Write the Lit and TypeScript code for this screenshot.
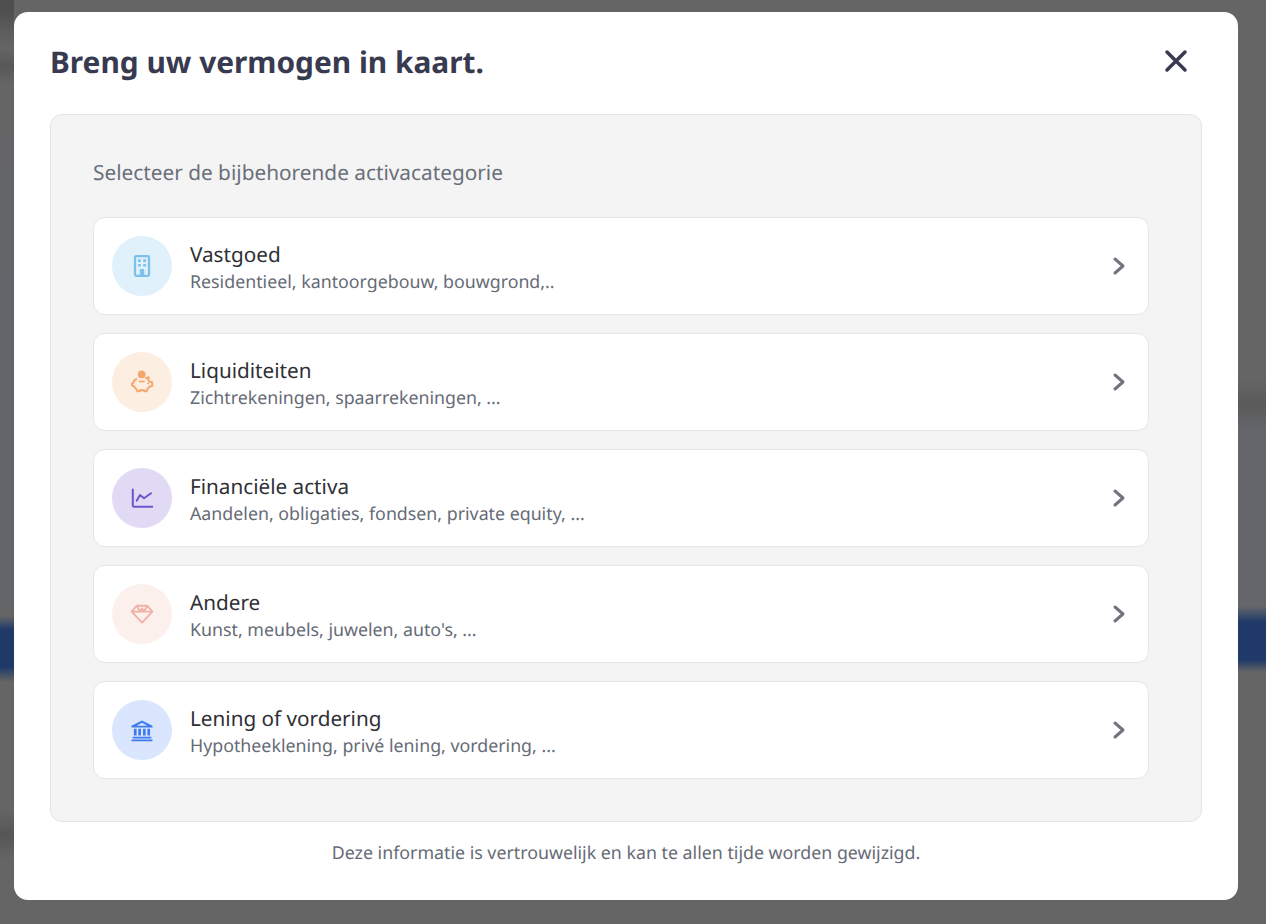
import { LitElement, html, css, svg } from "lit";
import { customElement } from "lit/decorators.js";

const icons = {
  building: svg`<path fill="none" stroke="currentColor" stroke-width="2.300" d="M5 3.500c0-.8.5-1.300 1.300-1.300h11.400c.8 0 1.300.5 1.300 1.300v17c0 .8-.5 1.300-1.300 1.300H6.300c-.8 0-1.300-.5-1.300-1.300z"/><path fill="currentColor" d="M8 5.300h2.800v2.600H8zM13.200 5.300H16v2.600h-2.800zM8 9.900h2.800v2.600H8zM13.200 9.900H16v2.600h-2.800zM9.800 15h4.400v6.800H9.800z"/>`,
  piggy: svg`<circle cx="11.700" cy="4.400" r="3.900" fill="currentColor"/><path fill="none" stroke="currentColor" stroke-width="2" stroke-linejoin="round" d="M7 8.600C4.800 9.500 3.600 11 3.500 12.800c-.6 0-1.500.3-1.600 1.200-.1 1 .7 1.900 2 2.100.5 1.300 1.400 2.300 2.600 3l.8 2.100h2.400l.4-1.100c1.300.2 2.500.2 3.800 0l.4 1.100h2.400l.8-2.500c1-.6 1.700-1.300 2.200-2.200l2.500-.4v-3.900l-2.400-.4c-.4-.8-.9-1.500-1.500-2l.3-2.600c-1.300 0-2.500.7-3.200 1.700"/><path stroke="currentColor" stroke-width="1.700" d="M8.700 11.500h6"/><circle cx="18.200" cy="13.300" r="1.100" fill="currentColor"/>`,
  chart: svg`<path fill="none" stroke="currentColor" stroke-width="2" stroke-linecap="round" stroke-linejoin="round" d="M2.800 3.400v15.800c0 1 .5 1.500 1.500 1.500h18"/><path fill="none" stroke="currentColor" stroke-width="2" stroke-linecap="round" stroke-linejoin="round" d="M6.700 14.700L10 9l4 3.300 7-5"/>`,
  diamond: svg`<path fill="none" stroke="currentColor" stroke-width="1.900" stroke-linejoin="round" d="M6.600 3.800h10.800l5 5.800L12 20.600 1.600 9.600zM1.600 9.600h20.800M6.600 3.800l3.400 5.800 2-3.200 2 3.200 3.400-5.800"/>`,
  bank: svg`<path fill="currentColor" d="M12 2.600l10.500 5.200v1.800h-21V7.800zM12 4.800L6.600 7.700h10.800zM3.900 10.800h2.700v6.800H3.900zM8.300 10.800H11v6.800H8.300zM13 10.800h2.700v6.800H13zM17.400 10.800h2.700v6.800h-2.700zM2.700 18.800h18.600v1.700H2.700zM1.500 21.400h21v1.800h-21z"/>`,
};

const rows = [
  { icon: icons.building, tone: "sky", title: "Vastgoed", sub: "Residentieel, kantoorgebouw, bouwgrond,.." },
  { icon: icons.piggy, tone: "peach", title: "Liquiditeiten", sub: "Zichtrekeningen, spaarrekeningen, ..." },
  { icon: icons.chart, tone: "violet", title: "Financiële activa", sub: "Aandelen, obligaties, fondsen, private equity, ..." },
  { icon: icons.diamond, tone: "rose", title: "Andere", sub: "Kunst, meubels, juwelen, auto's, ..." },
  { icon: icons.bank, tone: "blue", title: "Lening of vordering", sub: "Hypotheeklening, privé lening, vordering, ..." },
];

@customElement("app-root")
export class AppRoot extends LitElement {
  static styles = css`
    :host {
      display: block;
      height: 924px;
      box-sizing: border-box;
      padding: 12px 28px 24px 14px;
      font-family: "Noto Sans", "Open Sans", sans-serif;
      text-rendering: geometricPrecision;
      background:
        linear-gradient(
            to bottom,
            #4f4f4f 12px,
            #5c5c5c 30px,
            #656565 48px,
            #585858 66px,
            #656565 84px,
            #63656a 290px,
            #63656a 600px,
            #656565 616px,
            #1f3a68 630px,
            #1f3a68 667px,
            #656565 682px,
            #656565 810px,
            #565656 835px,
            #656565 860px
          )
          left / 14px 100% no-repeat,
        linear-gradient(
            to bottom,
            #656565 380px,
            #5a5a5a 405px,
            #65666b 430px,
            #65666b 606px,
            #1f3a68 622px,
            #1f3a68 660px,
            #656565 672px
          )
          right / 28px 100% no-repeat,
        #656565;
    }
    .modal {
      height: 888px;
      box-sizing: border-box;
      background: #fff;
      border-radius: 14px;
      padding: 0 36px;
      display: flex;
      flex-direction: column;
    }
    .head {
      height: 102px;
      display: flex;
      align-items: center;
      justify-content: space-between;
      flex: none;
    }
    h1 {
      margin: 0 0 2px;
      font-size: 29.850px;
      line-height: 40px;
      font-weight: 700;
      color: #383a50;
    }
    .close {
      width: 24px;
      height: 24px;
      margin: 0 14px 4px 0;
      color: #383a50;
    }
    .panel {
      height: 708px;
      flex: none;
      box-sizing: border-box;
      background: #f4f4f4;
      border: 1px solid #e4e4e4;
      border-radius: 12px;
      padding: 44px 52px 0 42px;
    }
    h2 {
      margin: 0 0 30px;
      font-size: 20.800px;
      line-height: 28px;
      font-weight: 400;
      color: #6a6f7a;
    }
    .list {
      display: flex;
      flex-direction: column;
      gap: 18px;
    }
    .row {
      height: 98px;
      box-sizing: border-box;
      background: #fff;
      border: 1px solid #e6e6e6;
      border-radius: 12px;
      padding: 0 17px 0 18px;
      display: flex;
      align-items: center;
    }
    .badge {
      width: 60px;
      height: 60px;
      border-radius: 50%;
      flex: none;
      display: flex;
      align-items: center;
      justify-content: center;
      margin-right: 18px;
    }
    .badge svg {
      width: 24px;
      height: 24px;
    }
    .sky { background: #e0f1fb; color: #7cc1ea; }
    .peach { background: #fdeee2; color: #f4a76c; }
    .violet { background: #e1daf5; color: #6a55c9; }
    .rose { background: #fcf0ed; color: #f0b2a8; }
    .blue { background: #d9e6fd; color: #3f7bee; }
    .text {
      flex: 1;
      min-width: 0;
      padding-top: 4px;
    }
    .title {
      font-size: 20.700px;
      line-height: 26px;
      color: #2f3036;
    }
    .sub {
      font-size: 17.800px;
      line-height: 26px;
      margin-top: 1px;
      color: #666b76;
    }
    .chevron {
      width: 24px;
      height: 24px;
      flex: none;
      color: #6f747e;
    }
    .note {
      margin: 0;
      padding-top: 18px;
      text-align: center;
      font-size: 17.800px;
      line-height: 26px;
      color: #666b76;
    }
  `;

  render() {
    return html`
      <div class="modal">
        <div class="head">
          <h1>Breng uw vermogen in kaart.</h1>
          <svg class="close" viewBox="0 0 24 24">
            <path
              d="M3 3l18 18M21 3L3 21"
              fill="none"
              stroke="currentColor"
              stroke-width="3.500"
              stroke-linecap="round"
            />
          </svg>
        </div>
        <div class="panel">
          <h2>Selecteer de bijbehorende activacategorie</h2>
          <div class="list">
            ${rows.map(
              (r) => html`
                <div class="row">
                  <div class="badge ${r.tone}">
                    <svg viewBox="0 0 24 24">${r.icon}</svg>
                  </div>
                  <div class="text">
                    <div class="title">${r.title}</div>
                    <div class="sub">${r.sub}</div>
                  </div>
                  <svg class="chevron" viewBox="0 0 24 24">
                    <path
                      d="M8 5l8 7-8 7"
                      fill="none"
                      stroke="currentColor"
                      stroke-width="3"
                      stroke-linecap="round"
                      stroke-linejoin="round"
                    />
                  </svg>
                </div>
              `
            )}
          </div>
        </div>
        <p class="note">Deze informatie is vertrouwelijk en kan te allen tijde worden gewijzigd.</p>
      </div>
    `;
  }
}
